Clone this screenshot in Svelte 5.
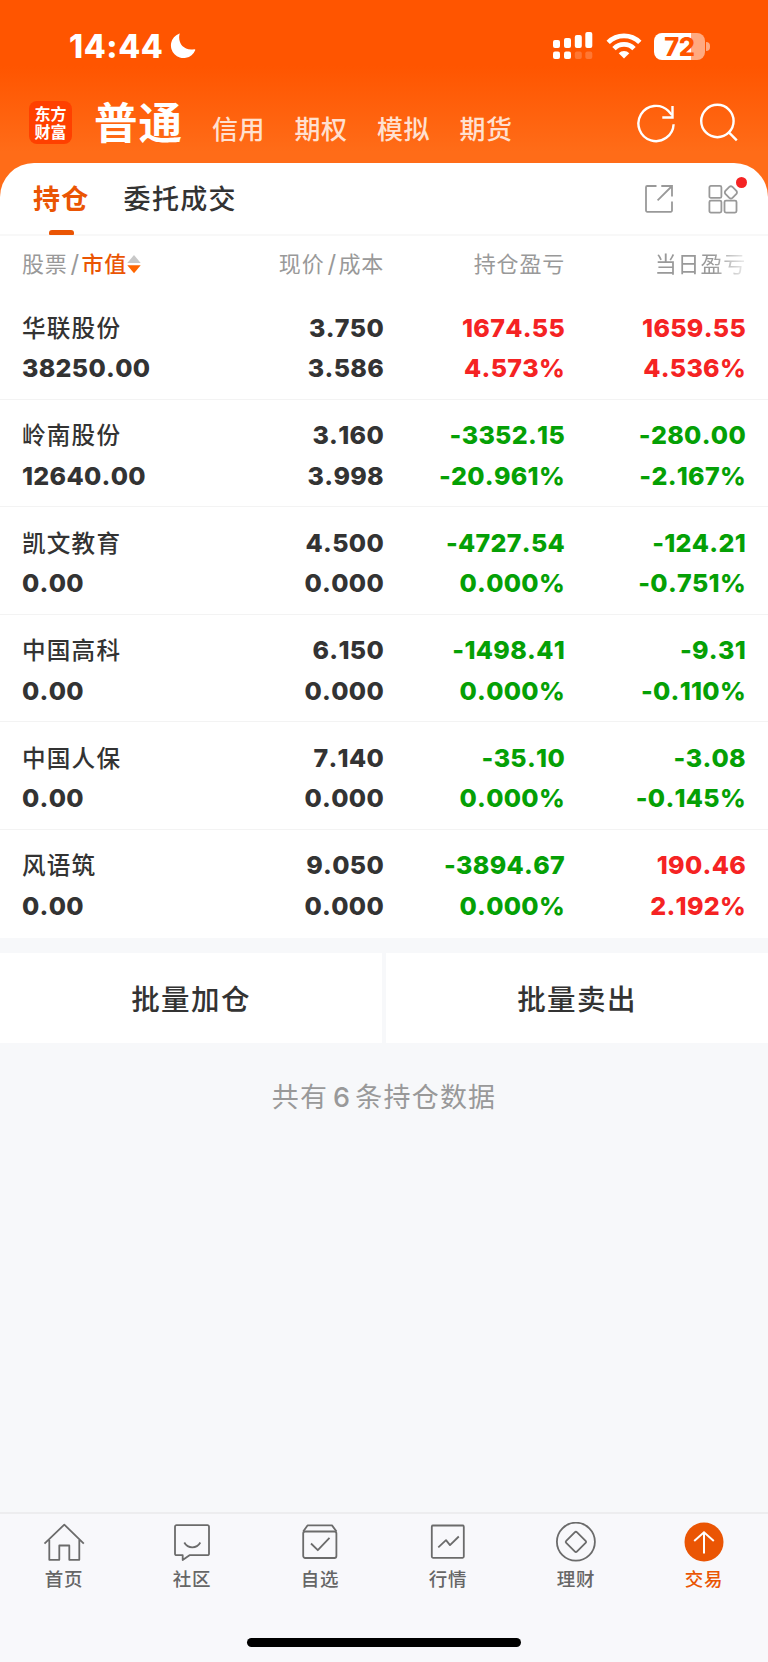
<script lang="ts">
  type Tone = "up" | "down";
  type Holding = {
    name: string;
    value: string;
    price: string;
    cost: string;
    total: [string, string, Tone];
    today: [string, string, Tone];
  };

  const accounts = ["信用", "期权", "模拟", "期货"];

  const holdings: Holding[] = [
    { name: "华联股份", value: "38250.00", price: "3.750", cost: "3.586", total: ["1674.55", "4.573%", "up"], today: ["1659.55", "4.536%", "up"] },
    { name: "岭南股份", value: "12640.00", price: "3.160", cost: "3.998", total: ["-3352.15", "-20.961%", "down"], today: ["-280.00", "-2.167%", "down"] },
    { name: "凯文教育", value: "0.00", price: "4.500", cost: "0.000", total: ["-4727.54", "0.000%", "down"], today: ["-124.21", "-0.751%", "down"] },
    { name: "中国高科", value: "0.00", price: "6.150", cost: "0.000", total: ["-1498.41", "0.000%", "down"], today: ["-9.31", "-0.110%", "down"] },
    { name: "中国人保", value: "0.00", price: "7.140", cost: "0.000", total: ["-35.10", "0.000%", "down"], today: ["-3.08", "-0.145%", "down"] },
    { name: "风语筑", value: "0.00", price: "9.050", cost: "0.000", total: ["-3894.67", "0.000%", "down"], today: ["190.46", "2.192%", "up"] },
  ];

  const tabs = ["首页", "社区", "自选", "行情", "理财", "交易"];
  let active = $state("交易");
</script>

<div class="screen">
  <header>
    <div class="status">
      <span class="time">14:44</span>
      <svg class="moon" width="26" height="26" viewBox="0 0 26 26">
        <path d="M9.600 1C7.400 9.800 13.500 18.200 24.300 16.200c.8-.1 1.200.3.900 1A12.600 12.600 0 1 1 9 .7c.5-.3.800-.2.600.3z" fill="#fff" />
      </svg>
      <svg class="signal" width="40" height="28" viewBox="0 0 40 28" fill="#fff">
        <rect x="0" y="8" width="7" height="8" rx="2" />
        <rect x="11" y="6" width="7" height="10" rx="2" />
        <rect x="21.800" y="3" width="7" height="13" rx="2" />
        <rect x="32.300" y="0" width="7" height="16" rx="2" />
        <rect x="0" y="19.500" width="7" height="7.500" rx="2" />
        <rect x="11" y="19.500" width="7" height="7.500" rx="2" />
        <rect x="21.800" y="19.500" width="7" height="7.500" rx="2" opacity=".2" />
        <rect x="32.300" y="19.500" width="7" height="7.500" rx="2" opacity=".2" />
      </svg>
      <svg class="wifi" width="36" height="26" viewBox="0 0 36 26">
        <g fill="none" stroke="#fff" stroke-width="4.800">
          <path d="M2.200 9.400a22.500 22.500 0 0 1 31.600 0" />
          <path d="M8 15.600a14 14 0 0 1 20 0" />
        </g>
        <path d="M18 25.500l-5.300-5.300a7.500 7.500 0 0 1 10.600 0z" fill="#fff" />
      </svg>
      <div class="battery"><span>72</span></div>
      <i class="nub"></i>
    </div>

    <nav class="accounts">
      <div class="logo"><span>东方</span><span>财富</span></div>
      <h1>普通</h1>
      {#each accounts as account}
        <span class="account">{account}</span>
      {/each}
      <svg class="refresh" width="40" height="40" viewBox="0 0 40 40" fill="none" stroke="#fff" stroke-width="2.400">
        <path d="M37.600 21.200A17.600 17.600 0 1 1 32.600 8.200l3.400 3.800" />
        <path d="M36.500 3v11.500H26.300" />
      </svg>
      <svg class="search" width="40" height="40" viewBox="0 0 40 40" fill="none" stroke="#fff" stroke-width="2.400">
        <circle cx="18.400" cy="18" r="16.200" />
        <path d="M29.600 29.200l8.200 8.200" />
      </svg>
    </nav>
  </header>

  <main>
    <div class="tabs">
      <button class="tab current">持仓</button>
      <button class="tab">委托成交</button>
      <svg class="share" width="30" height="30" viewBox="0 0 30 30" fill="none" stroke="#999" stroke-width="1.800">
        <path d="M12.500 2H3.200A1.200 1.200 0 0 0 2 3.200v23.400a1.200 1.200 0 0 0 1.200 1.200h23.600a1.200 1.200 0 0 0 1.200-1.200V17.500" />
        <path d="M17.300 2H28v10.500M28 2L13.600 16.400" />
      </svg>
      <div class="more">
        <svg width="30" height="30" viewBox="0 0 30 30" fill="none" stroke="#999" stroke-width="1.800">
          <rect x="1.400" y="1.900" width="12" height="12" rx="1.500" />
          <rect x="1.400" y="16.600" width="12" height="12" rx="1.500" />
          <rect x="16.500" y="16.600" width="12" height="12" rx="1.500" />
          <path d="M21.300 2.900q1.600-1.300 3.200 0l3.900 4q1.100 1.500 0 3l-3.900 4q-1.600 1.300-3.200 0l-3.900-4q-1.100-1.500 0-3z" />
        </svg>
        <i class="dot"></i>
      </div>
    </div>

    <div class="row heading">
      <div class="sort">
        股票<b>/</b><em>市值</em>
        <svg width="14" height="20" viewBox="0 0 14 20">
          <path d="M7 1l6.700 8H.3z" fill="#c8c8c8" />
          <path d="M7 19.200L.3 11.200h13.400z" fill="#f60" />
        </svg>
      </div>
      <div>现价<b>/</b>成本</div>
      <div>持仓盈亏</div>
      <div class="fade">当日盈亏</div>
    </div>

    {#each holdings as h}
      <div class="row holding">
        <div><span class="name">{h.name}</span><span>{h.value}</span></div>
        <div><span>{h.price}</span><span>{h.cost}</span></div>
        <div class={h.total[2]}><span>{h.total[0]}</span><span>{h.total[1]}</span></div>
        <div class={h.today[2]}><span>{h.today[0]}</span><span>{h.today[1]}</span></div>
      </div>
    {/each}
  </main>

  <div class="actions">
    <button>批量加仓</button>
    <button>批量卖出</button>
  </div>
  <p class="summary">共有<span>6</span>条持仓数据</p>

  <footer>
    <div class="tabbar">
      {#each tabs as tab, i}
        <button class:active={active === tab} onclick={() => (active = tab)}>
          <svg width="42" height="42" viewBox="0 0 42 42" fill="none" stroke="#6b6b6b" stroke-width="1.800" stroke-linejoin="round">
            {#if i === 0}
              <path d="M1.500 21.700L21.300 2.700l19.500 19M6.300 18v19.800h10V23.500h10v14.300h10V18" />
            {:else if i === 1}
              <path d="M5.500 3.200h31a1.500 1.500 0 0 1 1.500 1.500v27a1.500 1.500 0 0 1-1.500 1.500H18.500l-6.800 4.800v-4.800H5.500A1.500 1.500 0 0 1 4 31.700v-27a1.500 1.500 0 0 1 1.500-1.500z" />
              <path d="M13.300 20.500q2.700 4.800 8 4.800t8-4.800" />
            {:else if i === 2}
              <path d="M4.200 9.500L8.500 3.400H33l4.500 6.100" />
              <rect x="4.200" y="9.500" width="33.200" height="26.500" rx="2" />
              <path d="M12 21.500l6.800 6.700 11.700-12.400" />
            {:else if i === 3}
              <rect x="4.800" y="3.500" width="32" height="32.300" rx="1.200" />
              <path d="M11.300 25.300l7.700-7.200 4 5 8.800-8.600" />
            {:else if i === 4}
              <circle cx="20.900" cy="19.700" r="19" />
              <path d="M19.700 10.400q1.200-1.200 2.400 0l8.500 8.500q1 1 0 2l-8.500 8.500q-1.200 1.200-2.400 0l-8.500-8.500q-1-1 0-2z" />
            {:else}
              <circle cx="21" cy="20" r="19.500" fill="#ea5504" stroke="none" />
              <path d="M21 31.500V10.700M11.200 19L21 10.300l9.800 8.700" stroke="#fff" stroke-width="2" stroke-linejoin="miter" />
            {/if}
          </svg>
          <span>{tab}</span>
        </button>
      {/each}
    </div>
    <div class="indicator"></div>
  </footer>
</div>

<style>
  :global(body) {
    margin: 0;
  }

  .screen {
    width: 768px;
    height: 1662px;
    display: flex;
    flex-direction: column;
    overflow: hidden;
    background: #f7f8fa;
    color: #333;
    font-family: "Inter", "Noto Sans CJK SC", sans-serif;
  }

  button {
    margin: 0;
    padding: 0;
    border: 0;
    background: none;
    color: inherit;
    font: inherit;
  }

  svg {
    display: block;
    flex: none;
  }

  header {
    height: 163px;
    padding-bottom: 40px;
    margin-bottom: -40px;
    flex: none;
    background: linear-gradient(#ff5500 0, #ff5500 66px, #ff6c18 152px, #ff6c18 100%);
    color: #fff;
  }

  .status {
    display: flex;
    align-items: center;
    height: 92px;
    padding-left: 69px;
    box-sizing: border-box;
  }

  .time {
    width: 101px;
    font-size: 32px;
    font-weight: 800;
    letter-spacing: 0.600px;
  }

  .signal {
    margin-left: 357px;
  }

  .wifi {
    margin-left: 13px;
  }

  .battery {
    width: 51px;
    height: 27px;
    margin-left: 12px;
    border-radius: 8px;
    background: linear-gradient(90deg, #fff 0 36.500px, #ffaa80 36.500px);
    color: #ff5500;
    font-size: 25.500px;
    font-weight: 800;
    line-height: 27px;
    text-align: center;
    letter-spacing: -0.500px;
  }

  .nub {
    width: 4px;
    height: 9px;
    margin-left: 1px;
    border-radius: 0 4px 4px 0;
    background: #ffaa80;
  }

  .accounts {
    display: flex;
    align-items: center;
    height: 61px;
    padding-left: 29px;
  }

  .logo {
    display: flex;
    flex-direction: column;
    justify-content: center;
    width: 43px;
    height: 43px;
    border-radius: 8px;
    background: #ff4000;
    font-size: 16px;
    font-weight: 700;
    line-height: 18px;
    text-align: center;
  }

  h1 {
    width: 118px;
    margin: 0 0 0 22px;
    font-size: 43.500px;
    font-weight: 700;
    line-height: 60px;
    letter-spacing: 1px;
  }

  .account {
    width: 82.500px;
    padding-top: 15px;
    color: #ffe0d0;
    font-size: 26px;
    font-weight: 500;
    line-height: 36px;
    letter-spacing: 0.500px;
  }

  .refresh {
    margin-left: 94px;
  }

  .search {
    margin-left: 23px;
  }

  main {
    flex: none;
    border-radius: 34px 34px 0 0;
    background: #fff;
  }

  .tabs {
    display: flex;
    align-items: center;
    height: 71px;
    padding-left: 33px;
    border-bottom: 2px solid #f8f8f8;
  }

  .tab {
    position: relative;
    height: 71px;
    margin-right: 34px;
    padding-top: 3px;
    box-sizing: border-box;
    font-size: 27px;
    font-weight: 500;
    line-height: 68px;
    letter-spacing: 1.300px;
  }

  .current {
    color: #ea5504;
    font-weight: 700;
  }

  .current::after {
    content: "";
    position: absolute;
    left: 16px;
    bottom: -1px;
    width: 25px;
    height: 5px;
    border-radius: 3px 3px 1px 1px;
    background: #ea5504;
  }

  .share {
    margin-left: auto;
  }

  .more {
    position: relative;
    margin: 0 30px 0 34px;
  }

  .dot {
    position: absolute;
    top: -7px;
    right: -9px;
    width: 11px;
    height: 11px;
    border-radius: 50%;
    background: #f52323;
  }

  .row {
    display: grid;
    grid-template-columns: 182px 180px 181px 181px;
    padding-left: 22px;
    text-align: right;
  }

  .row > :first-child {
    text-align: left;
  }

  .heading {
    height: 56px;
    color: #999;
    font-size: 22px;
    line-height: 56px;
    letter-spacing: 0.800px;
  }

  .heading b {
    margin: 0 1.500px 0 3px;
    font-size: 24px;
    font-weight: 400;
  }

  .sort {
    display: flex;
    align-items: center;
  }

  .sort em {
    color: #ea5504;
    font-style: normal;
    font-weight: 500;
  }

  .fade {
    mask-image: linear-gradient(90deg, #000 148px, transparent 188px);
  }

  .holding {
    box-sizing: border-box;
    height: 107.600px;
    padding-top: 15.500px;
    border-bottom: 1px solid #f3f3f3;
    font-size: 25px;
    font-weight: 800;
    font-kerning: none;
    line-height: 40.500px;
    letter-spacing: 0.300px;
  }

  .holding:last-child {
    border-bottom: 0;
  }

  .holding span {
    display: block;
    height: 40.500px;
  }

  .holding .name {
    padding-top: 1px;
    height: 39.500px;
    font-size: 23.600px;
    font-weight: 500;
    letter-spacing: 1.200px;
  }

  .up {
    color: #f52323;
  }

  .down {
    color: #05a005;
  }

  .actions {
    display: flex;
    gap: 4px;
    margin-top: 15px;
    flex: none;
  }

  .actions button {
    flex: 1;
    height: 90px;
    background: #fff;
    font-size: 28.500px;
    font-weight: 500;
    letter-spacing: 1.400px;
  }

  .summary {
    margin: 35px 0 0;
    color: #999;
    font-size: 27px;
    line-height: 40px;
    letter-spacing: 1.200px;
    text-align: center;
  }

  .summary span {
    margin: 0 4px 0 5px;
    font-weight: 500;
  }

  footer {
    margin-top: auto;
    height: 148px;
    border-top: 2px solid #ededef;
    background: #f8f8fb;
  }

  .tabbar {
    display: flex;
    height: 124px;
  }

  .tabbar button {
    display: flex;
    flex: 1;
    flex-direction: column;
    align-items: center;
    padding-top: 7.500px;
    color: #666;
    font-size: 18.500px;
    font-weight: 500;
    line-height: 30px;
    letter-spacing: 0.800px;
  }

  .tabbar .active {
    color: #ea5504;
  }

  .indicator {
    width: 274px;
    height: 9px;
    margin: 0 auto;
    border-radius: 5px;
    background: #000;
  }
</style>
